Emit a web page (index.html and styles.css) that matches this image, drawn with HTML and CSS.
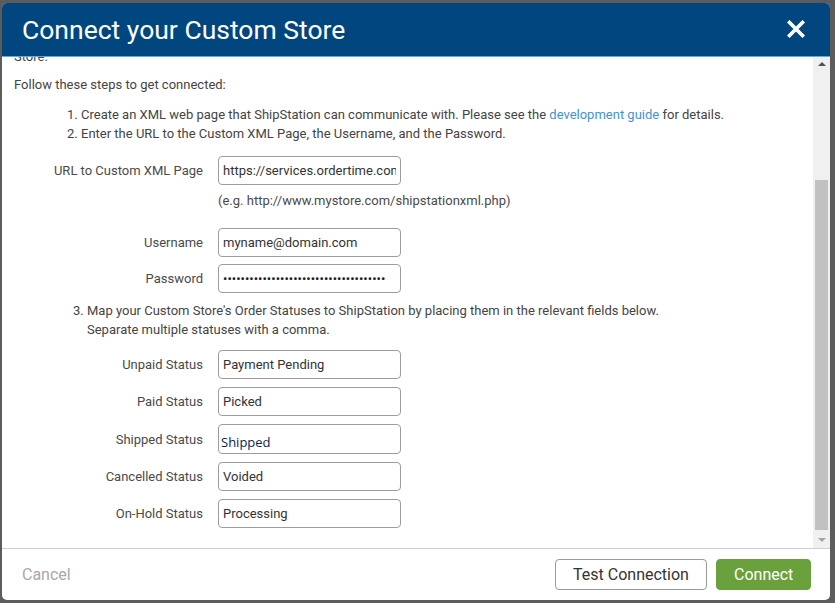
FILE: index.html
```html
<!DOCTYPE html>
<html lang="en">
<head>
<meta charset="utf-8">
<title>Connect your Custom Store</title>
<link rel="stylesheet" href="styles.css">
</head>
<body>
<div class="modal">
  <div class="modal-header">
    <h1 class="modal-title">Connect your Custom Store</h1>
    <button class="close-btn" type="button" aria-label="Close">
      <svg width="18" height="18" viewBox="0 0 18 18"><path d="M2.5 2.5 L15.5 15.5 M15.5 2.5 L2.5 15.5" stroke="#fff" stroke-width="3.6" stroke-linecap="square" fill="none"/></svg>
    </button>
  </div>
  <div class="modal-main">
    <div class="modal-body" id="scroller">
      <p class="intro">ShipStation can connect with any custom-built or unsupported shopping cart or order system<br>by means of an XML page that you host on your own web server.</p>
      <p class="intro intro-last">When ShipStation asks for orders, your XML page returns the orders changed in a date range.<br>When an order ships in ShipStation, we post the shipment details back to that same page.<br>Your page must accept a username and password so that only ShipStation can reach it.<br>Once the connection is set up, orders will import on a schedule or on demand from your<br>Store.</p>
      <p class="lead">Follow these steps to get connected:</p>
      <ol class="steps">
        <li>Create an XML web page that ShipStation can communicate with. Please see the <a class="link" href="#">development guide</a> for details.</li>
        <li>Enter the URL to the Custom XML Page, the Username, and the Password.</li>
      </ol>
      <div class="field first-field">
        <label class="field-label">URL to Custom XML Page</label>
        <input class="field-input" type="text" value="https://services.ordertime.com/shipstation/xml">
      </div>
      <div class="hint">(e.g. http://www.mystore.com/shipstationxml.php)</div>
      <div class="field user-field">
        <label class="field-label">Username</label>
        <input class="field-input" type="text" value="myname@domain.com">
      </div>
      <div class="field tight">
        <label class="field-label">Password</label>
        <input class="field-input pw" type="password" value="aaaaaaaaaaaaaaaaaaaaaaaaaaaaaaaaaaaaa">
      </div>
      <ol class="steps steps-three" start="3">
        <li>Map your Custom Store's Order Statuses to ShipStation by placing them in the relevant fields below.<br>Separate multiple statuses with a comma.</li>
      </ol>
      <div class="status-list">
        <div class="field">
          <label class="field-label">Unpaid Status</label>
          <input class="field-input" type="text" value="Payment Pending">
        </div>
        <div class="field">
          <label class="field-label">Paid Status</label>
          <input class="field-input" type="text" value="Picked">
        </div>
        <div class="field">
          <label class="field-label">Shipped Status</label>
          <input class="field-input alt" type="text" value="Shipped">
        </div>
        <div class="field">
          <label class="field-label">Cancelled Status</label>
          <input class="field-input" type="text" value="Voided">
        </div>
        <div class="field">
          <label class="field-label">On-Hold Status</label>
          <input class="field-input" type="text" value="Processing">
        </div>
      </div>
    </div>
    <div class="scrollbar" aria-hidden="true">
      <div class="sb-btn"><span class="arrow-up"></span></div>
      <div class="sb-track"><div class="sb-thumb"></div></div>
      <div class="sb-btn sb-btn-down"><span class="arrow-down"></span></div>
    </div>
  </div>
  <div class="modal-footer">
    <button class="btn-cancel" type="button">Cancel</button>
    <div class="footer-actions">
      <button class="btn btn-outline" type="button">Test Connection</button>
      <button class="btn btn-primary" type="button">Connect</button>
    </div>
  </div>
</div>
<script src="script.js"></script>
</body>
</html>
```

FILE: styles.css
```css
html, body {
  margin: 0;
  padding: 0;
}
body {
  background: #5c5c5c;
  font-family: Roboto, "Liberation Sans", Arial, sans-serif;
  width: 835px;
  height: 603px;
  overflow: hidden;
}
.modal {
  margin: 3px 0 0 2px;
  width: 828px;
  height: 597px;
  background: #fff;
  border-radius: 5px;
  overflow: hidden;
  display: flex;
  flex-direction: column;
}
.modal-header {
  flex: 0 0 auto;
  height: 53px;
  background: #01467f;
  border-bottom: 1px solid #58ade4;
  display: flex;
  align-items: center;
  justify-content: space-between;
  padding: 0 25px 0 20px;
}
.modal-title {
  margin: 0;
  color: #fff;
  font-weight: 400;
  font-size: 26.5px;
  line-height: 30px;
  padding-top: 1px;
}
.close-btn {
  background: none;
  border: 0;
  padding: 0;
  width: 18px;
  height: 18px;
  display: flex;
  margin-top: -2px;
}
.modal-main {
  flex: 1 1 auto;
  min-height: 0;
  display: flex;
}
.modal-body {
  flex: 1 1 auto;
  overflow: hidden;
  padding: 12px 0 20px 12px;
  color: #444;
  font-size: 13px;
  line-height: 19px;
}
.scrollbar {
  flex: 0 0 17px;
  display: flex;
  flex-direction: column;
  background: #f0f0f0;
}
.sb-btn {
  flex: 0 0 17px;
  display: flex;
  justify-content: center;
  align-items: flex-start;
  padding-top: 5px;
  box-sizing: border-box;
}
.sb-btn-down {
  padding-top: 7px;
}
.arrow-up {
  width: 0;
  height: 0;
  border-left: 4px solid transparent;
  border-right: 4px solid transparent;
  border-bottom: 4px solid #505050;
}
.arrow-down {
  width: 0;
  height: 0;
  border-left: 4px solid transparent;
  border-right: 4px solid transparent;
  border-top: 4px solid #a3a3a3;
}
.sb-track {
  flex: 1 1 auto;
  display: flex;
  flex-direction: column;
  justify-content: flex-end;
  padding: 0 2px 1px;
}
.sb-thumb {
  height: 350px;
  background: #c1c1c1;
}
.intro {
  margin: 0 0 11px;
}
.intro-last {
  margin-bottom: 9px;
}
.lead {
  margin: 0 0 11px;
}
.steps {
  margin: 0;
  padding-left: 67px;
}
.steps-three {
  margin-top: 8px;
  padding-left: 73px;
}
.link {
  color: #3f93d6;
  text-decoration: none;
}
.field {
  display: grid;
  grid-template-columns: 189px 183px;
  column-gap: 15px;
  align-items: center;
}
.first-field {
  margin-top: 13px;
}
.user-field {
  margin-top: 18px;
}
.tight {
  margin-top: 7px;
}
.field-label {
  text-align: right;
  color: #4a4a4a;
}
.field-input {
  box-sizing: border-box;
  height: 29px;
  width: 183px;
  margin: 0;
  border: 1px solid #9d9d9d;
  border-radius: 4px;
  padding: 0 4px;
  font-family: Roboto, "Liberation Sans", Arial, sans-serif;
  font-size: 13px;
  color: #333;
  background: #fff;
  outline: none;
}
.field-input.pw {
  font-size: 13px;
  color: #222;
}
.field-input.alt {
  font-family: "Open Sans", "Noto Sans", sans-serif;
  font-size: 13px;
  color: #0a1f4f;
  padding: 6px 2px 0;
  height: 30px;
}
.hint {
  margin: 6px 0 0 204px;
  color: #4a4a4a;
}
.status-list {
  margin-top: 11px;
  display: flex;
  flex-direction: column;
  gap: 8px;
}
.modal-footer {
  flex: 0 0 auto;
  height: 51px;
  border-top: 1px solid #cfcfcf;
  display: flex;
  align-items: center;
  justify-content: space-between;
  padding: 0 19px 0 20px;
}
.btn-cancel {
  background: none;
  border: 0;
  padding: 0;
  font-family: Roboto, "Liberation Sans", Arial, sans-serif;
  font-size: 16px;
  color: #a9a9a9;
}
.footer-actions {
  display: flex;
  gap: 9px;
}
.btn {
  box-sizing: border-box;
  height: 31px;
  border-radius: 4px;
  font-family: Roboto, "Liberation Sans", Arial, sans-serif;
  font-size: 16px;
  padding: 0 17px;
}
.btn-outline {
  width: 152px;
  background: #fff;
  border: 1px solid #9a9a9a;
  color: #333;
}
.btn-primary {
  width: 95px;
  background: #6ba13c;
  border: 1px solid #6ba13c;
  color: #fff;
}
```

FILE: script.js
```js
var scroller = document.getElementById('scroller');
scroller.scrollTop = scroller.scrollHeight;
```
